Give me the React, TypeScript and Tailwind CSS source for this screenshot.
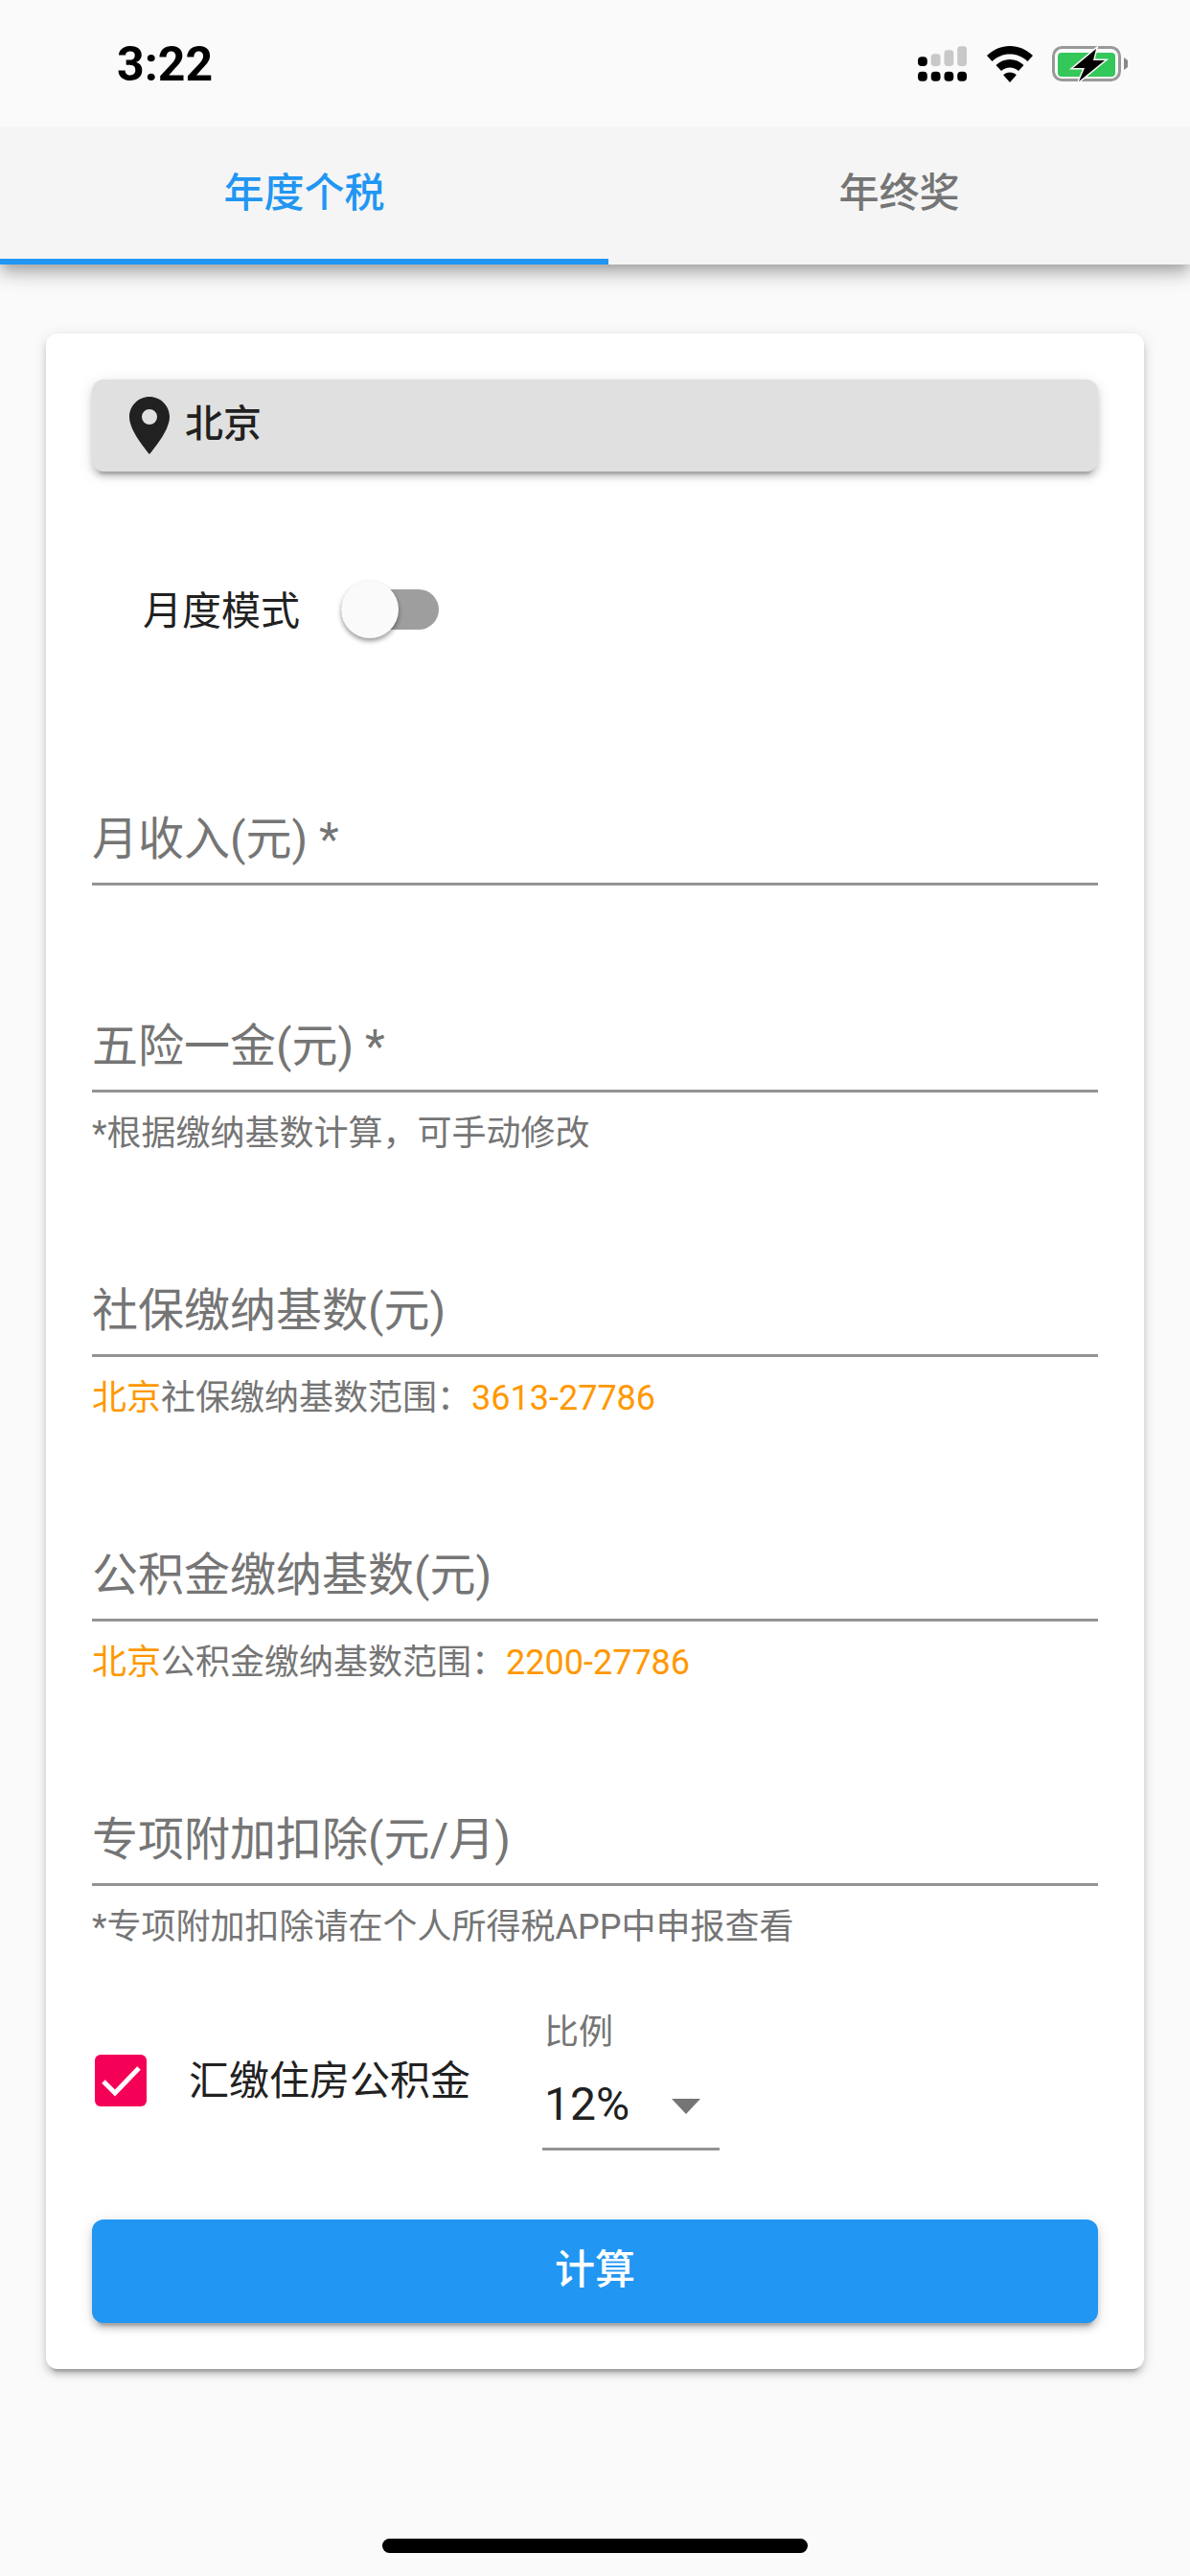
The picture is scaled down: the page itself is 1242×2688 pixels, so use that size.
const fontStack = { fontFamily: '"Roboto", "Noto Sans CJK SC", sans-serif' };

// material elevation 2, at 3x
const elevation2 =
  "shadow-[0_9px_3px_-6px_rgba(0,0,0,0.2),0_6px_6px_0_rgba(0,0,0,0.14),0_3px_15px_0_rgba(0,0,0,0.12)]";

function StatusIcons() {
  return (
    <div className="flex items-center">
      <svg width="51" height="38" viewBox="0 0 52 38">
        <rect x="0" y="11" width="10" height="10" rx="4" fill="#000" />
        <rect x="14" y="8" width="10" height="13" rx="3.5" fill="#c8c8c8" />
        <rect x="28" y="4" width="10" height="17" rx="3.5" fill="#c8c8c8" />
        <rect x="42" y="0" width="10" height="21" rx="3.5" fill="#c8c8c8" />
        <rect x="0" y="27" width="10" height="10" rx="4" fill="#000" />
        <rect x="14" y="27" width="10" height="10" rx="4" fill="#000" />
        <rect x="28" y="27" width="10" height="10" rx="4" fill="#000" />
        <rect x="42" y="27" width="10" height="10" rx="4" fill="#000" />
      </svg>
      <svg className="ml-[21px]" width="48" height="38" viewBox="0 0 48 38">
        <path d="M24 0C15 0 7 3.5 0 10l5.5 6C10.800 11 17 8.500 24 8.500S37.200 11 42.500 16L48 10C41 3.500 33 0 24 0Z" fill="#000" />
        <path d="M24 14c-5.500 0-10.500 2-14.500 6l5.500 6c2.500-2.300 5.500-3.500 9-3.500s6.500 1.200 9 3.500l5.500-6C34.500 16 29.500 14 24 14Z" fill="#000" />
        <path d="M24 27.500c-2.700 0-5 1-6.800 2.700L24 38l6.800-7.800C29 28.500 26.700 27.500 24 27.500Z" fill="#000" />
      </svg>
      <svg className="ml-[20px]" width="79" height="38" viewBox="0 0 79 38">
        <rect x="1.500" y="1.500" width="69" height="34" rx="9" fill="none" stroke="#999" strokeWidth="3" />
        <rect x="6" y="7" width="60" height="25" rx="4" fill="#34c759" />
        <path d="M75 12l4 3v7l-4 3Z" fill="#888" />
        <path d="M46 3L22 23h12l-6 14 27-22H43l3-12Z" fill="#000" stroke="#fafafa" strokeWidth="3" paintOrder="stroke" />
      </svg>
    </div>
  );
}

function Field({
  label,
  className,
  children,
}: {
  label: string;
  className: string;
  children?: React.ReactNode;
}) {
  return (
    <div className={className}>
      <div className="h-[83px] border-b-[3px] border-[#949494] pt-[2px] text-[48px] leading-[66px] text-[#757575]">
        {label}
      </div>
      {children && (
        <div className="mt-[19px] text-[36px] leading-[48px] text-[#757575]">{children}</div>
      )}
    </div>
  );
}

export default function App() {
  return (
    <div className="relative h-[2688px] w-[1242px] overflow-hidden bg-[#fafafa]" style={fontStack}>
      {/* Status bar */}
      <div className="relative z-20 flex h-[132px] items-start justify-between bg-[#fafafa] pl-[122px] pr-[65px] pt-[48px]">
        <span className="text-[50px] font-bold leading-[38px] text-black">3:22</span>
        <StatusIcons />
      </div>

      {/* Tabs */}
      <div className="relative z-10 flex h-[144px] bg-[#f5f5f5] shadow-[0_6px_12px_-3px_rgba(0,0,0,0.2),0_12px_15px_0_rgba(0,0,0,0.14),0_3px_30px_0_rgba(0,0,0,0.12)]">
        <div className="flex h-full w-[635px] items-center justify-center border-b-[6px] border-[#2196f3] text-[42px] font-medium text-[#2196f3]">
          年度个税
        </div>
        <div className="flex h-full flex-1 items-center justify-center pb-[6px] text-[42px] font-medium text-[#757575]">
          年终奖
        </div>
      </div>

      {/* Card */}
      <div className={`mx-[48px] mt-[72px] rounded-[12px] bg-white px-[48px] pb-[48px] pt-[48px] ${elevation2}`}>
        <div className={`flex h-[96px] items-center rounded-[12px] bg-[#e0e0e0] pl-[39px] ${elevation2}`}>
          <svg width="42" height="60" viewBox="0 0 42 60">
            <path
              d="M21 0C9.400 0 0 9.400 0 21c0 12 12 28 21 39 9-11 21-27 21-39C42 9.400 32.600 0 21 0Zm0 29a8 8 0 1 1 0-16 8 8 0 0 1 0 16Z"
              fill="#212121"
            />
          </svg>
          <span className="mb-[3px] ml-[16px] text-[40px] font-medium text-[#212121]">北京</span>
        </div>

        <div className="mt-[114px] flex h-[60px] items-center">
          <span className="ml-[53px] pt-[4px] text-[41px] leading-[60px] text-[#212121]">月度模式</span>
          <div className="relative ml-[43px] h-[42px] w-[102px] rounded-full bg-[#9e9e9e]">
            <div className="absolute left-0 top-[-9px] h-[60px] w-[60px] rounded-full bg-[#fafafa] shadow-[0_3px_5px_rgba(0,0,0,0.4)]" />
          </div>
        </div>

        <Field label="月收入(元) *" className="mt-[175px]" />
        <Field label="五险一金(元) *" className="mt-[133px]">
          *根据缴纳基数计算，可手动修改
        </Field>
        <Field label="社保缴纳基数(元)" className="mt-[126px]">
          <span className="text-[#ff9800]">北京</span>社保缴纳基数范围：
          <span className="text-[#ff9800]">3613-27786</span>
        </Field>
        <Field label="公积金缴纳基数(元)" className="mt-[126px]">
          <span className="text-[#ff9800]">北京</span>公积金缴纳基数范围：
          <span className="text-[#ff9800]">2200-27786</span>
        </Field>
        <Field label="专项附加扣除(元/月)" className="mt-[126px]">
          *专项附加扣除请在个人所得税APP中申报查看
        </Field>

        {/* Housing fund row */}
        <div className="mt-[62px] flex items-center">
          <div className="ml-[3px] h-[54px] w-[54px] rounded-[6px] bg-[#f50057]">
            <svg width="54" height="54" viewBox="0 0 54 54">
              <path d="M9 28l12 12L46 14" fill="none" stroke="#fff" strokeWidth="5" />
            </svg>
          </div>
          <span className="ml-[44px] pt-[2px] text-[42px] text-[#212121]">汇缴住房公积金</span>
          <div className="ml-[75px] w-[185px]">
            <div className="pl-[2px] text-[36px] leading-[48px] text-[#757575]">比例</div>
            <div className="flex h-[99px] items-start justify-between border-b-[3px] border-[#949494] pl-[2px] pr-[20px] pt-[18px]">
              <span className="text-[48px] leading-[66px] text-[#212121]">12%</span>
              <svg className="mt-[27px]" width="30" height="16" viewBox="0 0 30 16">
                <path d="M0 0h30L15 16Z" fill="#757575" />
              </svg>
            </div>
          </div>
        </div>

        <div className={`mt-[72px] flex h-[108px] items-center justify-center rounded-[12px] bg-[#2196f3] pb-[3px] text-[42px] font-medium text-white ${elevation2}`}>
          计算
        </div>
      </div>

      {/* Home indicator */}
      <div className="absolute bottom-[24px] left-[399px] h-[15px] w-[444px] rounded-full bg-black" />
    </div>
  );
}
